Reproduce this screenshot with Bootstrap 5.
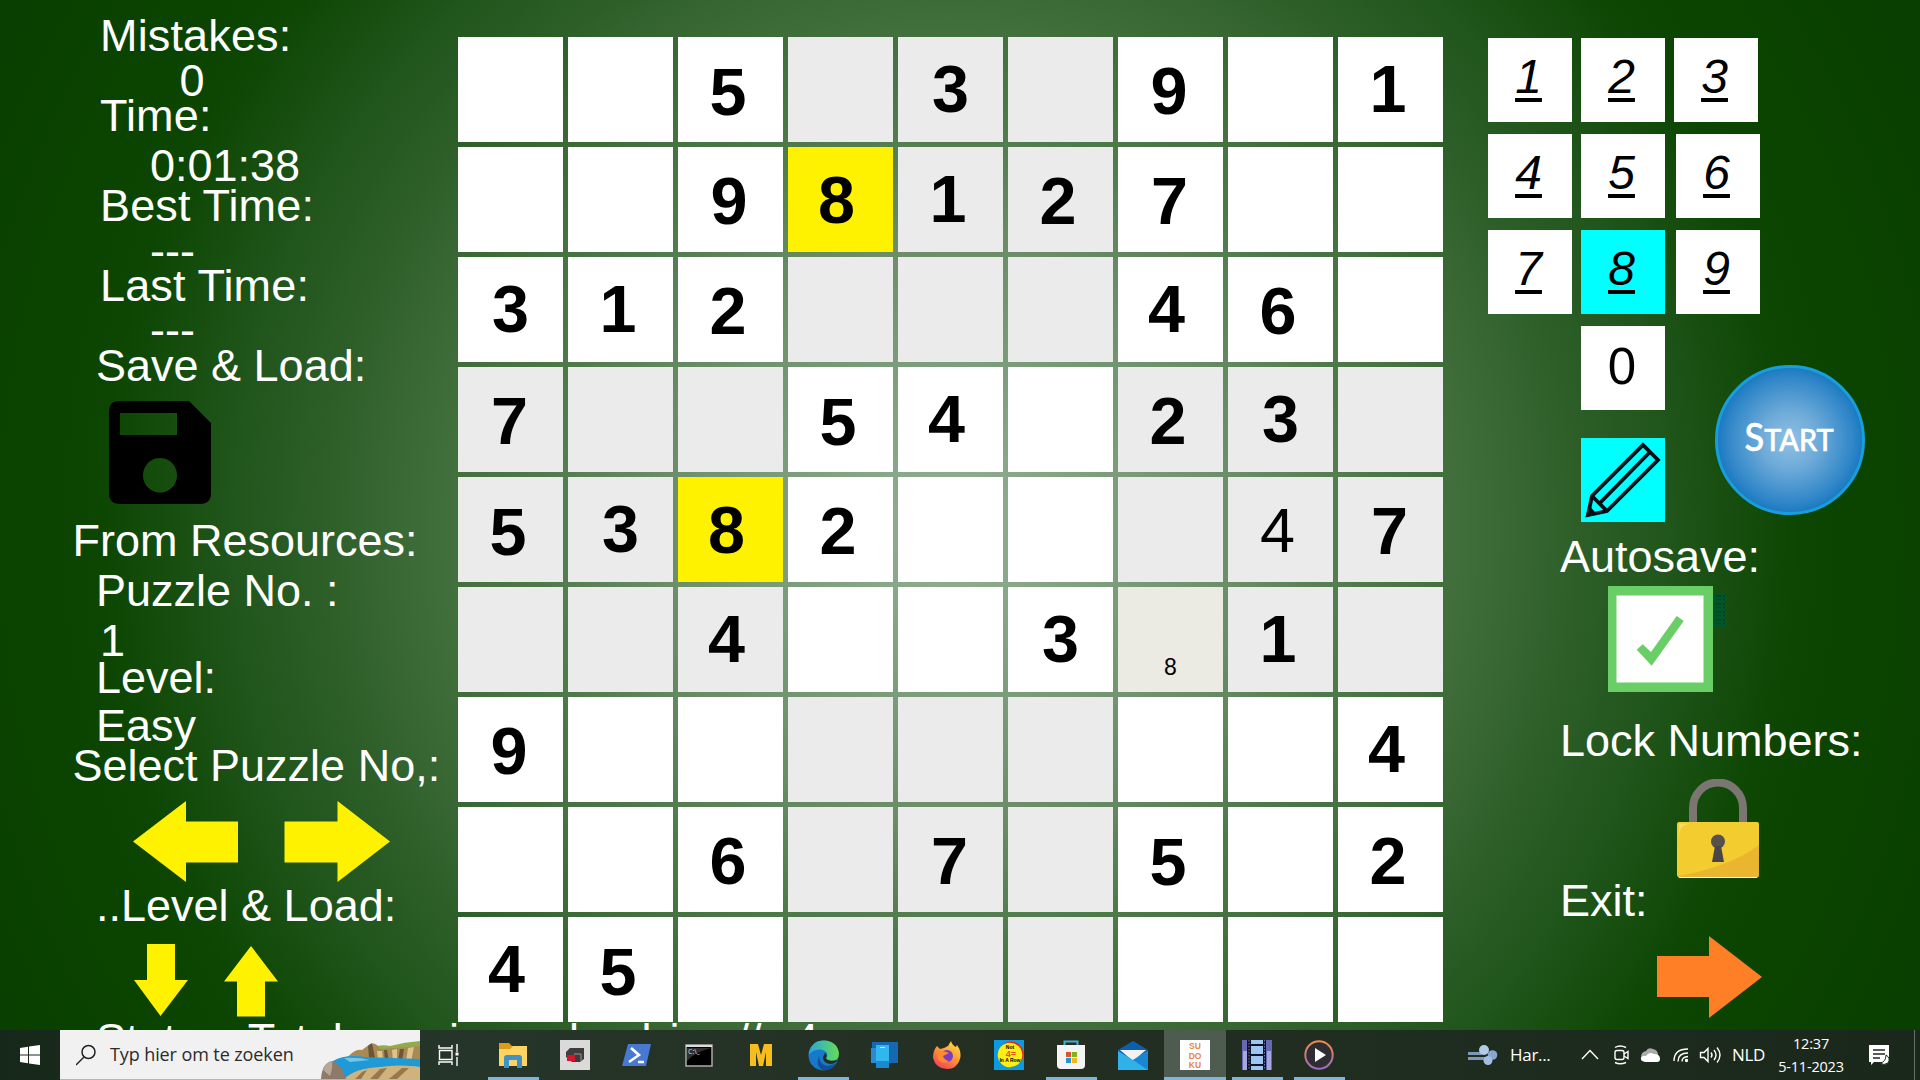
<!DOCTYPE html>
<html lang="nl">
<head>
<meta charset="utf-8">
<title>Sudoku</title>
<link rel="stylesheet" href="https://cdn.jsdelivr.net/npm/bootstrap@5.3.0/dist/css/bootstrap.min.css">
<style>
body{width:1920px;height:1080px;overflow:hidden;font-family:"Liberation Sans",Arial,sans-serif;color:#fff;
background:radial-gradient(circle at 950px 530px,#94b194 0,#7f9f7e 150px,#6a8d67 290px,#4e7a4a 410px,#3f6d3a 520px,#2d5e28 630px,#20551b 720px,#0c4602 850px,#0a4200 960px,#093f00 1100px)}
svg{display:block}
.game{height:1030px}
.side{width:457px;padding-top:13px;font-size:45px;line-height:45px;white-space:nowrap;display:grid;
grid-template-rows:45px 35px 50px 40px 45px 35px 44px 36px 58px 117px 50px 50px 37px 48px 40px 58px 82px 61px 73px 45px}
.in1{padding-left:72.5px}.in2{padding-left:96px}.in3{padding-left:100px;letter-spacing:.15px}.in4{padding-left:150px}.in5{padding-left:179.5px}
.in6{padding-left:100px}.in7{padding-left:109px}.in8{padding-left:133px}
.board{width:986px;display:grid;grid-template-columns:repeat(9,105px);grid-auto-rows:105px;gap:5px;padding:37px 0 0 1px;color:#000}
.cel{background:#fff;font-size:66.5px;line-height:66px;font-weight:700}
.shade{background:#ebebeb}.hit{background:#fff200}.picked{background:#ebebe3}
.n1{padding-right:5px;padding-bottom:2px}.n2{padding-right:5px;padding-top:2px}.n3{padding-bottom:2px}.n4{padding-right:8px;padding-bottom:2px}
.n5{padding-right:5px;padding-top:4px}.n6{padding-right:5px;padding-top:2px}.n7{padding-right:2px;padding-top:2px}.n8{padding-right:8px}.n9{padding-right:3px;padding-top:2px}
.entry{font-weight:400;font-size:63px;padding-right:6px}
.note{font-weight:400;font-size:23px;padding-top:54px}
.ctl{width:477px;padding:38px 0 0 45px;font-size:45px;line-height:45px}
.pad{display:grid;grid-template-columns:84px 84px 84px;row-gap:12px;column-gap:9px}
.pad .wide{margin-left:2px;margin-right:-2px}
.key{width:84px;height:84px;background:#fff;color:#000;font-size:48px;line-height:48px;padding:0 3px 6px 0}
.key.ul{font-style:italic;text-decoration:underline 3px;text-underline-offset:5px;text-decoration-skip-ink:none}
.on{background:#0ff}
.zero{font-size:51px;padding:0 2px 2px 0}
.pencil{margin-top:28px;padding:3px 0 0}
.low{padding:12px 0 0 93px}
.start{width:150px;height:150px;border:3px solid #179fdd;border-radius:50%;margin:39px 0 0 50px;
background:radial-gradient(circle at 50% 50%,#90c0e2 0,#6fabd9 28%,#2f86c8 62%,#1b78bf 72%)}
.opts{padding-left:72px;display:grid;grid-template-rows:52px 132px 61px 99px 58px 85px;padding-top:12px}
.tb{height:50px;background:linear-gradient(90deg,#16281a 0,#26352a 450px,#242f22 1000px,#1f2c20 1400px,#1a281c 1920px);font-family:"Open Sans","Noto Sans",sans-serif}
.find{width:360px;background:#f1f1f1;border-bottom:1px solid #b5b5b5;color:#2b2b2b;font-size:18px;letter-spacing:-.1px}
.app{width:62px;height:50px;position:relative}
.app.run::after{content:"";position:absolute;bottom:0;left:6px;right:5px;height:3px;background:#7cb6dc}
.app.cur{background:#4e5b50}.app.cur::after{left:0;right:0}
.tray{font-size:17px;letter-spacing:-.3px}
.clk{font-size:14.5px;line-height:23px;width:86px;letter-spacing:-.2px}
</style>
<script src="https://cdn.jsdelivr.net/npm/bootstrap@5.3.0/dist/js/bootstrap.bundle.min.js"></script>
</head>
<body>
<main class="game d-flex overflow-hidden">
  <section class="side flex-shrink-0">
    <div class="in3">Mistakes:</div>
    <div class="in5">0</div>
    <div class="in3">Time:</div>
    <div class="in4">0:01:38</div>
    <div class="in3">Best Time:</div>
    <div class="in4">---</div>
    <div class="in3">Last Time:</div>
    <div class="in4">---</div>
    <div class="in2">Save &amp; Load:</div>
    <div class="in7"><svg width="102" height="103" viewBox="0 0 102 103"><path fill="#000" fill-rule="evenodd" d="M10 0H80L102 22V92Q102 103 91 103H11Q0 103 0 92V11Q0 0 10 0ZM11 12V34H68V12ZM51 57a17 17.3 0 1 0 .01 0Z"/></svg></div>
    <div class="in1">From Resources:</div>
    <div class="in2">Puzzle No. :</div>
    <div class="in6">1</div>
    <div class="in2">Level:</div>
    <div class="in2">Easy</div>
    <div class="in1">Select Puzzle No,:</div>
    <div class="in8 d-flex"><svg width="257" height="81" viewBox="0 0 257 81" fill="#fff200"><path d="M0 40.5L53 0V20.500H105V61.500H53V81Z"/><path d="M257 40.500L204.500 0V20.500H151.500V61.500H204.500V81Z"/></svg></div>
    <div class="in2">..Level &amp; Load:</div>
    <div class="in8 d-flex"><svg width="146" height="73" viewBox="0 0 146 73" fill="#fff200"><path d="M14 0H42V36H55L27.500 72L1 36H14Z"/><path d="M118 2L145 37.500H132V72.500H104V37.500H91Z"/></svg></div>
    <div class="in2 d-flex gap-3"><span>Status: Total</span><span>running solved&thinsp;&thinsp;in</span><span class="ps-3">//</span><span class="ps-3">4</span></div>
  </section>

  <section class="board flex-shrink-0" id="board"></section>

  <section class="ctl flex-shrink-0">
    <div class="pad">
      <div class="key ul d-flex align-items-center justify-content-center"><u>1</u></div>
      <div class="key ul d-flex align-items-center justify-content-center"><u>2</u></div>
      <div class="key ul d-flex align-items-center justify-content-center"><u>3</u></div>
      <div class="key ul d-flex align-items-center justify-content-center"><u>4</u></div>
      <div class="key ul d-flex align-items-center justify-content-center"><u>5</u></div>
      <div class="key ul wide d-flex align-items-center justify-content-center"><u>6</u></div>
      <div class="key ul d-flex align-items-center justify-content-center"><u>7</u></div>
      <div class="key ul on d-flex align-items-center justify-content-center"><u>8</u></div>
      <div class="key ul wide d-flex align-items-center justify-content-center"><u>9</u></div>
    </div>
    <div class="low d-flex">
      <div>
        <div class="key zero d-flex align-items-center justify-content-center">0</div>
        <div class="key on pencil"><svg width="84" height="81" viewBox="0 3 84 81" fill="none" stroke="#001018" stroke-width="3.800"><path d="M7 77L11 58L62 7L77 22L26 73Z"/><path d="M11 58L26 73M18 66L69 14"/><path fill="#001018" stroke="none" d="M4.500 79L8 67L16 76.500Z"/></svg></div>
      </div>
      <div class="start d-flex"><svg width="144" height="144" viewBox="0 0 144 144" fill="#fff" font-family="Lato" font-weight="500" stroke="#fff" stroke-width=".6"><text x="26.500" y="83" font-size="39" textLength="89" lengthAdjust="spacingAndGlyphs">S<tspan font-size="31">TART</tspan></text></svg></div>
    </div>
    <div class="opts">
      <div>Autosave:</div>
      <div class="d-flex ps-5"><svg width="120" height="106" viewBox="0 0 120 106"><rect x="104" y="7" width="14" height="34" fill="#00562a"/><path d="M109 9v30M112 9v30M116 9v30" stroke="#003c16" stroke-width="1.500" stroke-dasharray="2 2 1 3"/><rect x="3.750" y="4.750" width="96.500" height="96.500" fill="#fff" stroke="#6ace66" stroke-width="9.500"/><path fill="#6ace66" d="M28.700 63.700L34.700 58.300L43 66L68.700 30L75.700 35L43.700 79.700Z"/></svg></div>
      <div>Lock Numbers:</div>
      <div class="d-flex"><svg width="202" height="99" viewBox="0 0 202 99"><path d="M133 44V29a25 25.500 0 0 1 50 0V44" fill="none" stroke="#7b7672" stroke-width="8"/><rect x="118" y="54" width="80" height="45" rx="2" fill="#fff" /><rect x="117" y="43" width="82" height="55" rx="2" fill="#f3cc2f"/><path fill="#eab630" d="M118 97Q170 88 199 66V96Q199 98 197 98H120Z"/><path fill="#f8dc62" d="M119 56Q120 45 132 44.500H119Z"/><circle cx="158" cy="62.500" r="7" fill="#57504f"/><path fill="#4a4445" d="M155 67H161L164 83H152Z"/></svg></div>
      <div>Exit:</div>
      <div class="d-flex"><svg width="202" height="82" viewBox="0 0 202 82"><path fill="#ff7f27" d="M202 41L149 0V20H97V61H149V82Z"/></svg></div>
    </div>
  </section>
</main>

<footer class="tb d-flex">
  <div class="d-flex align-items-center justify-content-center" style="width:60px"><svg class="mx-auto" width="20" height="20" viewBox="0 0 20 20" fill="#fff"><path d="M0 3L8 1.800V9.500H0ZM9 1.600L20 0V9.500H9ZM0 10.500H8V18.200L0 17ZM9 10.500H20V20L9 18.400Z"/></svg></div>
  <div class="find d-flex align-items-center">
    <svg class="ms-3" width="22" height="22" viewBox="0 0 22 22" fill="none" stroke="#222" stroke-width="1.500"><circle cx="12.500" cy="8" r="6.500"/><path d="M8 13L0 21"/></svg>
    <span class="ms-2 ps-1 flex-grow-1 text-nowrap">Typ hier om te zoeken</span>
    <svg class="flex-shrink-0" width="100" height="49" viewBox="0 0 100 49"><path fill="#8fae4a" d="M48 18Q60 14 70 16Q85 12 100 11V24H48Z"/><path fill="#a98a55" d="M26 29Q35 18 42 20L50 14Q56 12 60 19L75 18L100 16V34H26Z"/><path fill="#6d5638" d="M48 16L52 13L55 28H49ZM64 20l3 0 2 12h-4ZM80 19l4 0-2 12h-4Z"/><path fill="#dcc48b" d="M57 21l5 0 1 9h-5ZM72 20l5-1 0 12h-4ZM88 18l6-1-3 15h-5Z"/><path fill="#209ad6" d="M13 31Q25 24 45 27L100 29V37Q75 35 60 38Q40 41 26 49L10 38Z"/><path fill="#74c5e6" d="M24 28Q38 27 50 30L30 32Z"/><path fill="#cfb27c" d="M24 49Q35 38 60 37Q80 34 100 37V49Z"/><path fill="#97774c" d="M42 42l5-2-6 9h-6ZM60 39l7-1-9 11h-8ZM82 38l7 0-12 11h-8Z"/><path fill="#8d7a68" d="M1 49Q2 33 12 31Q22 34 26 49Z"/><path fill="#b8a796" d="M3 40Q6 32 12 31Q13 38 10 46Z"/></svg>
  </div>
  <div class="d-flex align-items-center justify-content-center pe-1" style="width:62px"><svg width="22" height="22" viewBox="0 0 22 22" fill="none" stroke="#fff" stroke-width="1.400"><path d="M1 1V4H14V1M1.500 6.500H14V15.500H1.500ZM1 21V18H14V21M19 0V8M19 13V22"/><rect x="18" y="9" width="2" height="2" fill="#fff" stroke-width="1"/></svg></div>
  <div class="d-flex">
    <div class="app run d-flex align-items-center justify-content-center"><svg width="30" height="26" viewBox="0 0 30 26"><path fill="#dd9b17" d="M1 1H11L14 4H17V8H1Z"/><path fill="#fcd462" d="M1 7H12L15 4H29V24H1Z"/><path fill="#3e91c9" d="M6 26V16Q6 13 9 13H21Q24 13 24 16V26H19V18H11V26Z"/></svg></div>
    <div class="app d-flex align-items-center justify-content-center"><svg width="30" height="30" viewBox="0 0 30 30"><path fill="#dadada" d="M0 0H30V30H0Z"/><path fill="#403b3d" d="M10 8H24V19L20 22H12L6 17V12Z"/><path fill="#d5152c" d="M7 15H15V21H7Z"/><path d="M14 14H21V21" stroke="#999" fill="none"/></svg></div>
    <div class="app d-flex align-items-center justify-content-center"><svg width="30" height="24" viewBox="0 0 30 24"><path fill="#4679cf" d="M6 1H29L24 23H0Z"/><path d="M9 5L17 12L7 19M16 19H22" stroke="#fff" stroke-width="2.600" fill="none"/></svg></div>
    <div class="app d-flex align-items-center justify-content-center"><svg width="28" height="23" viewBox="0 0 28 23"><path fill="#000" stroke="#aaa" stroke-width="1.500" d="M1 1H27V22H1Z"/><path d="M1 2H27" stroke="#ddd" stroke-width="2"/><path fill="#303030" d="M2 4H26Q10 8 2 17Z"/><text x="3" y="10" font-size="7" fill="#ddd">C:\_</text></svg></div>
    <div class="app d-flex align-items-center justify-content-center"><svg width="24" height="24" viewBox="0 0 24 24"><path fill="#f5bd1e" d="M1 1H9L12 12L15 1H23V23H17V9L14 23H10L7 9V23H1Z"/></svg></div>
    <div class="app run d-flex align-items-center justify-content-center"><svg width="31" height="31" viewBox="0 0 31 31"><defs><linearGradient id="eg"><stop stop-color="#28a7dc"/><stop offset="1" stop-color="#65dc53"/></linearGradient></defs><circle cx="15.500" cy="15.500" r="15" fill="#1679c9"/><path fill="url(#eg)" d="M1 12Q4 0 16 .5Q29 1 31 13Q31 21 23 21Q18 21 18 18Q20 16 19 13Q15 8 8 10Q3 11 1 15Z"/><path fill="#134e96" d="M11 16Q11 24 19 26Q24 26 28 23Q23 31 15 30Q7 26 11 16Z"/><path fill="#242f24" d="M17 13Q20 15 18 18Q20 22 30 20Q27 24 22 24Q15 23 15 17Z"/></svg></div>
    <div class="app d-flex align-items-center justify-content-center"><svg width="28" height="28" viewBox="0 0 28 28"><path fill="#1768b3" d="M1 1H27V22H1Z"/><path fill="#2a8bd3" d="M5 7H0V22H5Z"/><path fill="#30b7ee" d="M5 4H18V27H5Z"/><path fill="#1b88cf" d="M5 20H18V27H5Z"/><path stroke="#bdeeff" d="M9 6.500H14"/></svg></div>
    <div class="app d-flex align-items-center justify-content-center"><svg width="30" height="30" viewBox="0 0 30 30"><defs><linearGradient id="fg" x1=".8" y1="0" x2=".2" y2="1"><stop stop-color="#ffe14a"/><stop offset=".5" stop-color="#ff9230"/><stop offset="1" stop-color="#f23a60"/></linearGradient></defs><path fill="url(#fg)" d="M5 6L8 9L12 8L16 6L19 1Q20 5 24 7L25 5Q30 12 28 19Q25 29 15 29Q4 29 1 18Q1 10 5 6Z"/><circle cx="15" cy="16" r="6" fill="#7b3cc2"/><path fill="#ff8a30" d="M5 12Q12 10 17 13L11 16Q12 20 17 21Q10 25 6 19Z"/></svg></div>
    <div class="app d-flex align-items-center justify-content-center"><svg width="30" height="30" viewBox="0 0 30 30" font-family="Liberation Sans" font-weight="700" text-anchor="middle"><path fill="#0d9be0" d="M0 0H30V30H0Z"/><circle cx="17" cy="14" r="12.500" fill="#e8201c"/><circle cx="16" cy="15" r="12.300" fill="#ffee10"/><text x="16" y="9" font-size="5">Not</text><text x="17" y="17" font-size="9" fill="#e8501c">4=</text><text x="16" y="22" font-size="5">In A Row</text></svg></div>
    <div class="app run d-flex align-items-center justify-content-center"><svg width="30" height="30" viewBox="0 0 30 30"><path d="M8.500 7V1.500H21.500V7" fill="none" stroke="#3eaedb" stroke-width="2"/><path fill="#f4f4f4" d="M1 5H29V25Q29 29 25 29H5Q1 29 1 25Z"/><path fill="#e0532f" d="M10 12h5v5h-5Z"/><path fill="#7cb518" d="M16 12h5v5h-5Z"/><path fill="#2097d6" d="M10 18h5v5h-5Z"/><path fill="#f7b71c" d="M16 18h5v5h-5Z"/></svg></div>
    <div class="app d-flex align-items-center justify-content-center"><svg width="30" height="29" viewBox="0 0 30 29"><path fill="#0d5fae" d="M0 9L15 0L30 9V16H0Z"/><path fill="#f2f2f2" d="M2 9H28L15 20Z"/><path fill="#31b1ea" d="M0 10L15 19L30 10V29H0Z"/><path fill="#1a86d3" d="M30 10V29L15 19Z"/></svg></div>
    <div class="app run cur d-flex align-items-center justify-content-center"><svg width="30" height="30" viewBox="0 0 30 30" fill="#e8853f" font-family="Liberation Sans" font-weight="700" font-size="8.500" text-anchor="middle"><path fill="#fff" d="M0 0H30V30H0Z"/><text x="15" y="8.500">SU</text><text x="15" y="18.500">DO</text><text x="15" y="28">KU</text></svg></div>
    <div class="app run d-flex align-items-center justify-content-center"><svg width="30" height="30" viewBox="0 0 30 30"><path fill="#6668b4" d="M0 0H30V30H0Z"/><path fill="#a7a6e0" d="M1 11H5V30H1ZM25 11H29V30H25Z"/><path fill="#111329" d="M5 0H24V30H5Z"/><path fill="#9dc6f2" d="M9 0h12v4H9ZM9 6h12v8H9ZM9 16h12v8H9ZM9 26h12v4H9Z"/><path d="M7 0V30M22.500 0V30" stroke="#6a78b0" stroke-dasharray="1.500 1.500"/></svg></div>
    <div class="app run d-flex align-items-center justify-content-center"><svg width="30" height="30" viewBox="0 0 30 30"><defs><linearGradient id="pg" x2="0" y2="1"><stop stop-color="#f08a45"/><stop offset="1" stop-color="#9c6cc0"/></linearGradient></defs><circle cx="15" cy="15" r="13.700" fill="#2e2d33" stroke="url(#pg)" stroke-width="2"/><path fill="#fff" d="M11 8L22 15L11 22Z"/></svg></div>
  </div>
  <div class="tray d-flex align-items-center flex-grow-1 text-nowrap">
    <div class="d-flex align-items-center gap-2" style="width:231px;padding-left:118px"><svg class="flex-shrink-0" width="30" height="22" viewBox="0 0 30 22"><path d="M0 9.500H14M0 14.500H20" stroke="#7c97b8" stroke-width="2.800"/><circle cx="16" cy="6" r="5" fill="#b4cbe6"/><circle cx="24.500" cy="11" r="4.800" fill="#87a7cf"/><circle cx="20" cy="16.500" r="4.500" fill="#a2bddf"/></svg><span class="ps-1">Har...</span></div>
    <svg width="145" height="24" viewBox="0 0 145 24" fill="none" stroke="#fff" stroke-width="1.400"><path d="M1 16L9 7.500L17 16"/><rect x="34" y="7.500" width="9" height="9" rx="2"/><path d="M43 11L47 8.500V15.500L43 13M34 4.500Q39 1.500 45 4.500M34 19.500Q39 22 45 19.500"/><path fill="#aaa" stroke="none" d="M60 14Q60 9 65 8Q67 4 72 6Q77 7 77 12L66 16Z"/><path fill="#fff" stroke="none" d="M64 19Q59 18 60 14.500Q62 12 65 13Q68 8 73 11Q79 11 79 16Q79 19 76 19Z"/><path d="M93 18Q93 6 107 6M97 18.500Q97 10 107 10M101 18.500Q101 14 107 13.500"/><circle cx="105.500" cy="17.500" r="1" fill="#fff"/><path d="M119.500 9.500H123L127 5.500V18.500L123 14.500H119.500ZM130 9.500Q132 12 130 14.500M133 7Q137 12 133 17M136 4.500Q142 12 136 19.500"/></svg>
    <span class="ms-1" style="width:38px;padding-left:2px">NLD</span>
    <div class="clk text-center">12:37<br>5-11-2023</div>
    <svg class="ms-auto" width="46" height="50" viewBox="0 0 46 50"><path fill="#fff" d="M0 15H20V32H5L2 35V32H0Z"/><path stroke="#1d2a1f" stroke-width="1.500" d="M4 20H16M4 24H16M4 28H11"/><path fill="#fff" stroke="#1d2a1f" d="M17 25Q22 28 19 33Q15 36 11 33Q17 32 17 25Z"/><path d="M45.500 0V50" stroke="#667066"/></svg>
    <div style="width:5px"></div>
  </div>
</footer>

<script>
// One string per row; "e" = player entry, "p" = pencil note, dots are empty.
const rows = ["..5.3.9.1","..98127..","312...46.","7..54.23.","5382...e7","..4..3p1.","9.......4","..6.7.5.2","45......."];
const board = document.getElementById("board");
rows.forEach((row, r) => [...row].forEach((ch, c) => {
  const cell = document.createElement("div");
  let cls = "cel d-flex align-items-center justify-content-center";
  if (((r / 3 | 0) + (c / 3 | 0)) % 2) cls += " shade";
  if (ch === "8") cls += " hit";
  if (ch === "e") { cls += " entry"; ch = "4"; }
  else if (ch === "p") { cls += " note picked"; ch = "8"; }
  else if (ch !== ".") cls += " n" + ch;
  cell.className = cls;
  if (ch !== ".") cell.textContent = ch;
  board.append(cell);
}));
</script>
</body>
</html>
